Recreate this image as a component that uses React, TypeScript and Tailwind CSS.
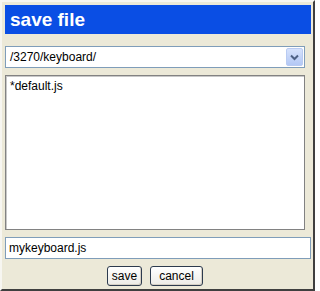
import { useState } from "react";

// ---------------------------------------------------------------------------
// Small XP-style chevron for the folder select
// ---------------------------------------------------------------------------
function Chevron() {
  return (
    <svg className="w-[9px] h-[7px]" viewBox="0 0 9 7" fill="none">
      <path d="M1 1.5l3.5 3.5 3.5-3.5" stroke="#4d6185" strokeWidth={2} />
    </svg>
  );
}

function XpButton({ label, width }: { label: string; width: string }) {
  return (
    <button
      className={`${width} h-[20px] rounded-[3px] border border-[#2d3b4e] bg-gradient-to-b from-white to-[#ecebe6] text-[12px] leading-none text-black shadow-[inset_-1px_-1px_0_#d6d0c5]`}
    >
      {label}
    </button>
  );
}

export default function App() {
  const [name, setName] = useState("mykeyboard.js");

  return (
    <div className="w-[315px] h-[291px] bg-[#ece9d8] border-2 border-t-[#f7f6f1] border-l-[#f7f6f1] border-r-[#3f3f3f] border-b-[#3f3f3f] pl-[3px] pt-[3px] pr-[2px] flex flex-col font-['Liberation_Sans',Arial,sans-serif]">
      {/* Title bar */}
      <div className="h-[29px] w-[306px] bg-[#0a4ee4] pl-[5px] flex items-center">
        <span className="text-[19px] font-bold text-white leading-none">
          save file
        </span>
      </div>

      {/* Folder select */}
      <div className="mt-[12px] h-[22px] w-[300px] border border-[#7f9db9] bg-white flex items-center">
        <span className="flex-1 pl-[4px] text-[12px] text-black">
          /3270/keyboard/
        </span>
        <div className="mr-[1px] h-[18px] w-[17px] rounded-[2px] border border-[#b9cbf2] bg-gradient-to-b from-[#d6e2fc] to-[#b3c8f5] flex items-center justify-center">
          <Chevron />
        </div>
      </div>

      {/* File list */}
      <div className="mt-[7px] h-[155px] w-[300px] border border-[#828282] shadow-[inset_1px_1px_0_#c8c8c8] bg-white px-[4px] pt-[3px]">
        <div className="text-[12px] text-black leading-[15px]">*default.js</div>
      </div>

      {/* File name */}
      <input
        value={name}
        onChange={(e) => setName(e.target.value)}
        className="mt-[7px] h-[22px] w-[306px] border border-[#7f9db9] bg-white px-[3px] text-[12px] text-black outline-none"
      />

      {/* Actions */}
      <div className="mt-[7px] flex justify-center gap-[8px] pr-[6px]">
        <XpButton label="save" width="w-[35px]" />
        <XpButton label="cancel" width="w-[53px]" />
      </div>
    </div>
  );
}
